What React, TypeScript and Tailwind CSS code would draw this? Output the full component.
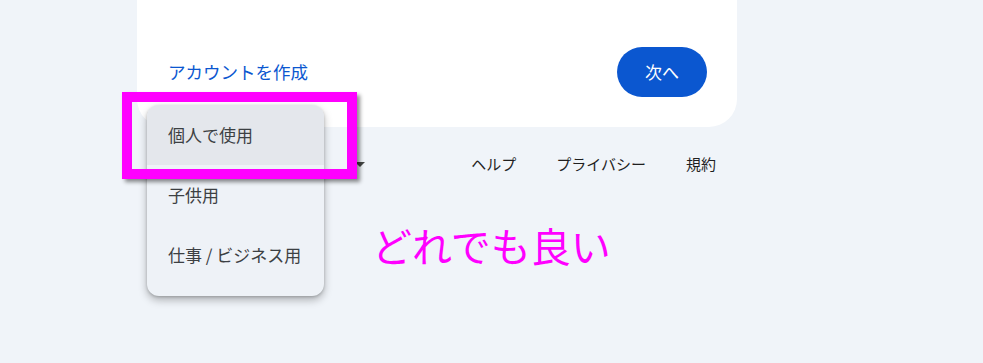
const jp = { fontFamily: '"Noto Sans CJK JP", "Noto Sans", sans-serif' };

function UseMenu() {
  const items = ["個人で使用", "子供用", "仕事 / ビジネス用"];
  return (
    <div className="absolute left-[147px] top-[105px] w-[177px] rounded-[12px] bg-[#eef2f7] pb-[11px] shadow-[0_4px_8px_rgba(0,0,0,0.28),0_1px_3px_rgba(0,0,0,0.18)] overflow-hidden">
      {items.map((label, i) => (
        <div
          key={label}
          className={
            "flex h-[60px] items-center pl-[21px] text-[17px] text-[#3c4043] " +
            (i === 0 ? "bg-[#e4e7ec]" : "")
          }
        >
          {label}
        </div>
      ))}
    </div>
  );
}

export default function App() {
  return (
    <div className="relative min-h-screen w-full bg-[#f0f4f9]" style={jp}>
      <div className="pl-[137px]">
        <div className="flex h-[127px] w-[600px] items-end rounded-b-[28px] bg-white pb-[30px]">
          <div className="flex w-full items-center justify-between pl-[31px] pr-[30px]">
            <span className="text-[17.5px] text-[#0b57d0]">アカウントを作成</span>
            <button className="h-[50px] rounded-full bg-[#0b57d0] px-[28px] text-[17px] text-white">
              次へ
            </button>
          </div>
        </div>

        <div className="mt-[17px] flex h-10 w-[600px] items-center justify-between pr-[21px]">
          <div className="flex items-center gap-2 pl-[30px] text-[15px] text-[#1f1f1f]">
            <span className="w-[180px]">日本語</span>
            <span className="h-0 w-0 border-x-[5px] border-t-[5px] border-x-transparent border-t-[#444746]" />
          </div>
          <div className="flex items-center gap-10 text-[15px] text-[#1f1f1f]">
            <span>ヘルプ</span>
            <span>プライバシー</span>
            <span>規約</span>
          </div>
        </div>

        <div className="ml-[235px] mt-[31px] text-[40px] leading-[60px] text-[#ff00ff]">
          どれでも良い
        </div>
      </div>

      <UseMenu />

      <div className="absolute left-[122px] top-[92px] h-[87px] w-[235px] border-[10px] border-[#ff00ff] shadow-[3px_3px_4px_rgba(0,0,0,0.45)]" />
    </div>
  );
}
